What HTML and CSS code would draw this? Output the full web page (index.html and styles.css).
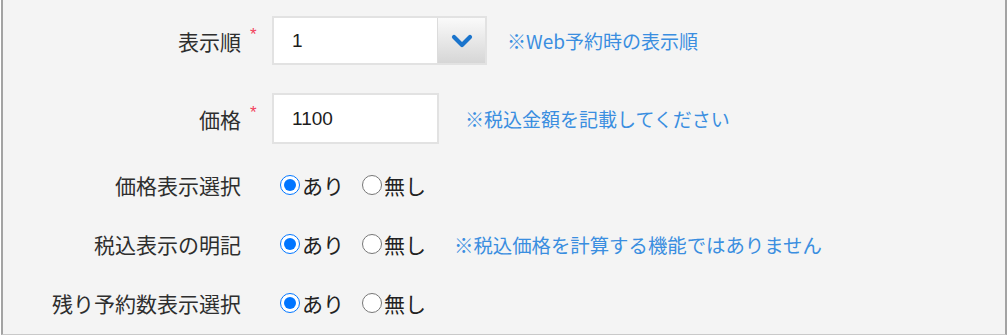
FILE: index.html
```html
<!DOCTYPE html>
<html>
<head>
    <title>メニュー設定</title>
    <link rel="stylesheet" href="styles.css">
</head>
<body>
    <div class="panel">
        <div class="row row-select">
            <div class="label">表示順</div>
            <div class="req">*</div>
            <div class="field">
                <div class="select">
                    <span class="select-value">1</span>
                    <span class="select-btn">
                        <svg width="22" height="14" viewBox="0 0 22 14">
                            <polyline points="3,3 11,11 19,3" fill="none" stroke="#1a74cc" stroke-width="4.2" stroke-linecap="round" stroke-linejoin="round"/>
                        </svg>
                    </span>
                </div>
                <span class="hint hint-select">※Web予約時の表示順</span>
            </div>
        </div>

        <div class="row row-input">
            <div class="label">価格</div>
            <div class="req">*</div>
            <div class="field">
                <input class="text-input" type="text" value="1100">
                <span class="hint hint-input">※税込金額を記載してください</span>
            </div>
        </div>

        <div class="row row-radio">
            <div class="label">価格表示選択</div>
            <div class="req"></div>
            <div class="field radios">
                <label><input type="radio" name="price_disp" checked>あり</label>
                <label><input type="radio" name="price_disp">無し</label>
            </div>
        </div>

        <div class="row row-radio">
            <div class="label">税込表示の明記</div>
            <div class="req"></div>
            <div class="field radios">
                <label><input type="radio" name="tax_disp" checked>あり</label>
                <label><input type="radio" name="tax_disp">無し</label>
                <span class="hint hint-radio">※税込価格を計算する機能ではありません</span>
            </div>
        </div>

        <div class="row row-radio">
            <div class="label">残り予約数表示選択</div>
            <div class="req"></div>
            <div class="field radios">
                <label><input type="radio" name="remain_disp" checked>あり</label>
                <label><input type="radio" name="remain_disp">無し</label>
            </div>
        </div>
    </div>
</body>
</html>
```

FILE: styles.css
```css
body {
    margin: 0;
    padding: 0;
    background-color: #fff;
    font-family: "Noto Sans CJK JP", "Liberation Sans", sans-serif;
    color: #333;
}

.panel {
    box-sizing: border-box;
    width: 1006px;
    height: 335px;
    margin-left: 1px;
    padding-top: 16px;
    background-color: #f4f4f4;
    border-left: 2px solid #a3a3a3;
    border-right: 2px solid #a3a3a3;
    border-bottom: 1px solid #c9c9c9;
}

.row {
    display: grid;
    grid-template-columns: 238px 31px 1fr;
    align-items: center;
}

.row-select {
    height: 49px;
    margin-bottom: 28px;
}

.row-input {
    height: 51px;
    margin-bottom: 26px;
}

.row-radio {
    height: 30px;
    margin-bottom: 29px;
}

.label {
    text-align: right;
    font-size: 21px;
    line-height: 30px;
    color: #2e2e2e;
}

.req {
    align-self: center;
    padding-left: 9px;
    padding-bottom: 12px;
    font-family: "Liberation Sans", sans-serif;
    font-size: 17px;
    color: #f2405c;
}

.field {
    display: flex;
    align-items: center;
    height: 100%;
}

.select {
    box-sizing: border-box;
    display: flex;
    width: 215px;
    height: 49px;
    background-color: #fff;
    border: 2px solid #e2e2e2;
}

.select-value {
    flex: 1;
    padding-left: 18px;
    font-family: "Liberation Sans", sans-serif;
    font-size: 19px;
    line-height: 45px;
    color: #1c1c1c;
}

.select-btn {
    display: flex;
    align-items: center;
    justify-content: center;
    width: 47px;
    border-left: 1px solid #dcdcdc;
    background: linear-gradient(#fafafa, #d6d6d6);
}

.text-input {
    box-sizing: border-box;
    width: 167px;
    height: 51px;
    padding: 0 0 0 18px;
    margin: 0;
    border: 2px solid #e2e2e2;
    background-color: #fff;
    font-family: "Liberation Sans", sans-serif;
    font-size: 19px;
    color: #1c1c1c;
    outline: none;
}

.hint {
    font-size: 19px;
    color: #3a8ee0;
    white-space: nowrap;
}

.hint-select {
    margin-left: 20px;
}

.hint-input {
    margin-left: 26px;
}

.hint-radio {
    margin-left: 28px;
    font-size: 19.4px;
}

.radios {
    padding-left: 8px;
}

.radios label {
    display: flex;
    align-items: center;
    margin-right: 18px;
    font-size: 21px;
    color: #222;
}

.radios label:last-of-type {
    margin-right: 0;
}

.radios input {
    width: 20px;
    height: 20px;
    margin: 0 2px 0 0;
}
```
